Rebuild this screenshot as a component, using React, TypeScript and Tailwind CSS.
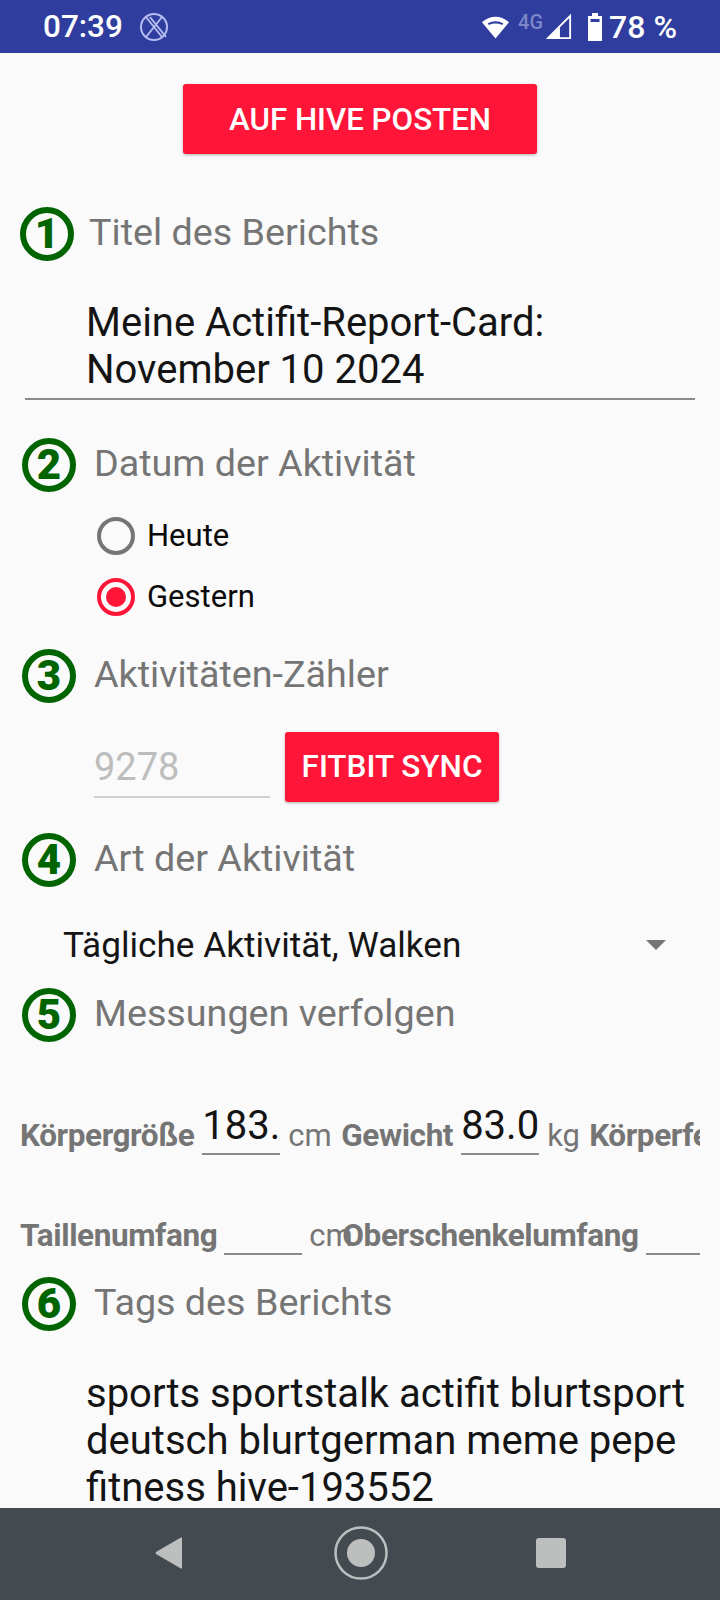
import React from "react";

const RED = "bg-[#fe1537]";

// Nummer im grünen Kreis
const StepHeader = ({ nr, title, titleX = "ml-[18px]", className = "" }: { nr: number; title: string; titleX?: string; className?: string }) => (
  <div className={`flex items-center h-[54px] ${className}`}>
    <div className="w-[54px] h-[54px] shrink-0 rounded-full border-[6px] border-[#006400] flex items-center justify-center text-[#006400] text-[42px] font-black font-['Roboto',sans-serif] leading-none">
      {nr}
    </div>
    <span className={`${titleX} text-[37.7px] leading-[44px] text-[#757575] -mt-[4px]`}>{title}</span>
  </div>
);

const Label = ({ text }: { text: string }) => (
  <span className="shrink-0 text-[31.5px] font-bold text-[#757575] leading-[36px] tracking-[-0.4px]">{text}</span>
);

const Unit = ({ text, w }: { text: string; w: string }) => (
  <span className={`shrink-0 ${w} text-[31px] text-[#757575] leading-[36px] whitespace-nowrap`}>{text}</span>
);

const Measure = ({ value = "", w = "w-[78px]" }: { value?: string; w?: string }) => (
  <div className={`shrink-0 ${w} h-[51px] border-b-2 border-[#8a8a8a] text-[40px] leading-[44px] text-[#141414] overflow-hidden -mb-[8px] -mt-[21px]`}>
    {value}
  </div>
);

const Radio = ({ label, checked }: { label: string; checked?: boolean }) => (
  <div className="flex items-center h-[61px] ml-[97px]">
    <div className={`w-[38px] h-[38px] rounded-full border-[4px] flex items-center justify-center ${checked ? "border-[#fe1537]" : "border-[#757575]"}`}>
      {checked && <div className={`w-[20px] h-[20px] rounded-full ${RED}`} />}
    </div>
    <span className="ml-[12px] text-[31px] leading-[36px] text-[#0a0a0a]">{label}</span>
  </div>
);

export default function App() {
  return (
    <div className="w-[720px] h-[1600px] flex flex-col bg-[#fafafa] font-['Roboto',sans-serif] overflow-hidden">
      {/* Statusleiste */}
      <header className="h-[53px] shrink-0 bg-[#2f3e9e] flex items-center text-white pl-[43px] pr-[43px]">
        <span className="text-[31.5px] font-medium leading-none">07:39</span>
        <svg width="30" height="30" viewBox="0 0 30 30" className="ml-[16px]" fill="none" stroke="#b4bcf0" strokeWidth="2">
          <circle cx="15" cy="15" r="13" />
          <path d="M7 5 L23 25 M23 5 L7 25 M11 5 L27 25" />
        </svg>
        <div className="ml-auto flex items-center">
          <svg width="29" height="26" viewBox="0 0 30 26" fill="white">
            <path d="M15 25 L1 8 Q15 -3 29 8 Z" />
            <path d="M7 9 Q15 5 23 9 L22 11 Q15 8 8 11 Z" fill="#2f3e9e" />
          </svg>
          <span className="ml-[8px] -mt-[10px] text-[20px] font-medium text-[#7c87c9] leading-none">4G</span>
          <svg width="26" height="26" viewBox="0 0 28 28" className="ml-[3px]" fill="none">
            <path d="M26 2 V26 H2 Z" stroke="white" strokeWidth="2" />
            <path d="M15 14 V26 H2 Z" fill="white" />
          </svg>
          <svg width="16" height="30" viewBox="0 0 16 30" className="ml-[15px]" fill="white">
            <path d="M5 1 H11 V4 H15 V29 H1 V4 H5 Z" />
            <rect x="3.5" y="7" width="9" height="3" fill="#2f3e9e" />
          </svg>
          <span className="ml-[6px] text-[32px] font-medium leading-none whitespace-nowrap">78 %</span>
        </div>
      </header>

      <main className="flex-1 min-h-0 overflow-hidden">
        <button className={`block mt-[31px] ml-[183px] w-[354px] h-[70px] pt-[3px] rounded-[3px] ${RED} text-white text-[31.3px] font-medium shadow-[0_1px_3px_rgba(0,0,0,0.3)]`}>
          AUF HIVE POSTEN
        </button>

        <StepHeader nr={1} title="Titel des Berichts" className="ml-[20px] mt-[53px]" titleX="ml-[15px]" />
        <div className="ml-[25px] w-[670px] mt-[38px] border-b-2 border-[#8a8a8a] pl-[61px] pb-[5px] text-[40px] leading-[47px] text-[#141414]">
          Meine Actifit-Report-Card:
          <br />
          November 10 2024
        </div>

        <StepHeader nr={2} title="Datum der Aktivität" className="ml-[22px] mt-[38px]" />
        <div className="mt-[13px]">
          <Radio label="Heute" />
          <Radio label="Gestern" checked />
        </div>

        <StepHeader nr={3} title="Aktivitäten-Zähler" className="ml-[22px] mt-[22px]" />
        <div className="flex items-center ml-[94px] mt-[29px]">
          <div className="w-[176px] h-[61px] border-b-2 border-[#d0d0d0] text-[38px] leading-[60px] text-[#bdbdbd]">9278</div>
          <button className={`ml-[15px] w-[214px] h-[70px] rounded-[3px] ${RED} text-white text-[31.5px] font-medium shadow-[0_1px_3px_rgba(0,0,0,0.3)]`}>
            FITBIT SYNC
          </button>
        </div>

        <StepHeader nr={4} title="Art der Aktivität" className="ml-[22px] mt-[31px]" />
        <div className="flex items-center h-[60px] ml-[63px] mt-[28px] w-[617px] justify-between">
          <span className="text-[35.2px] leading-[40px] text-[#141414]">Tägliche Aktivität, Walken</span>
          <div className="mr-[14px] w-0 h-0 border-l-[10px] border-r-[10px] border-t-[10px] border-l-transparent border-r-transparent border-t-[#757575]" />
        </div>

        <StepHeader nr={5} title="Messungen verfolgen" className="ml-[22px] mt-[13px]" />

        <div className="mt-[74px] ml-[20px] w-[680px] h-[40px] flex items-center gap-[8px] overflow-x-clip whitespace-nowrap">
          <Label text="Körpergröße" />
          <Measure value="183." />
          <Unit text="cm" w="w-[45px]" />
          <Label text="Gewicht" />
          <Measure value="83.0" />
          <Unit text="kg" w="w-[34px]" />
          <Label text="Körperfett" />
        </div>

        <div className="mt-[60px] ml-[20px] w-[680px] h-[40px] flex items-center gap-[7px] overflow-x-clip whitespace-nowrap">
          <Label text="Taillenumfang" />
          <Measure />
          <Unit text="cm" w="w-[26px]" />
          <Label text="Oberschenkelumfang" />
          <Measure />
        </div>

        <StepHeader nr={6} title="Tags des Berichts" className="ml-[22px] mt-[21px]" />
        <div className="ml-[86px] mt-[39px] w-[610px] text-[40px] leading-[47px] text-[#141414]">
          sports sportstalk actifit blurtsport
          <br />
          deutsch blurtgerman meme pepe
          <br />
          fitness hive-193552
        </div>
      </main>

      {/* Navigationsleiste */}
      <footer className="h-[92px] shrink-0 bg-[#434b51] flex items-center justify-center">
        <svg width="30" height="34" viewBox="0 0 30 34" fill="#bdbfbf" className="-mt-[2px]">
          <path d="M28 2 V32 Q28 33 26 32 L2 18 Q1 17 2 16 L26 2 Q28 1 28 2 Z" />
        </svg>
        <svg width="54" height="54" viewBox="0 0 54 54" className="-mt-[2px] ml-[150px]">
          <circle cx="27" cy="27" r="25.5" fill="none" stroke="#bdbfbf" strokeWidth="2.5" />
          <circle cx="27" cy="27" r="14" fill="#bdbfbf" />
        </svg>
        <div className="w-[30px] h-[30px] rounded-[3px] bg-[#bdbfbf] -mt-[2px] ml-[148px]" />
      </footer>
    </div>
  );
}
